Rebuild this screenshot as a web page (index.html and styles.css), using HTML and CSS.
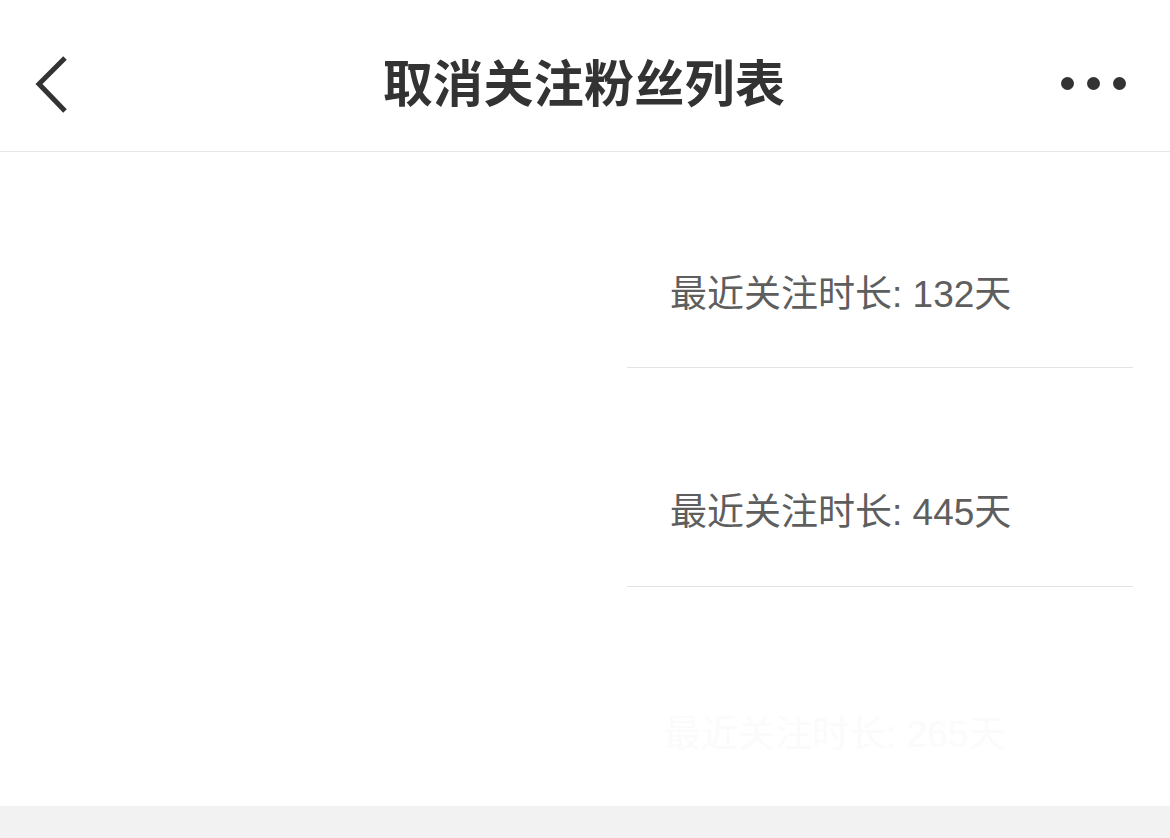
FILE: index.html
```html
<!DOCTYPE html>
<html lang="zh">
<head>
<meta charset="utf-8">
<title>取消关注粉丝列表</title>
<link rel="stylesheet" href="styles.css">
</head>
<body>
<div class="app">
  <header class="nav">
    <div class="nav-left">
      <svg class="back" width="40" height="64" viewBox="0 0 40 64">
        <polyline points="33,4 7,30 33,57" fill="none" stroke="#333" stroke-width="5" stroke-linecap="butt" stroke-linejoin="miter"/>
      </svg>
    </div>
    <h1 class="title">取消关注粉丝列表</h1>
    <div class="nav-right">
      <span class="dot"></span><span class="dot"></span><span class="dot"></span>
    </div>
  </header>
  <main class="content">
    <ul class="list">
      <li class="row first"><span class="label">最近关注时长: 132天</span></li>
      <li class="row"><span class="label">最近关注时长: 445天</span></li>
      <li class="row last"><span class="label ghost">最近关注时长: 265天</span></li>
    </ul>
  </main>
  <footer class="bottom"></footer>
</div>
</body>
</html>
```

FILE: styles.css
```css
* { box-sizing: border-box; }
html, body {
  margin: 0;
  padding: 0;
  background: #fff;
  font-family: "Noto Sans CJK SC", "Noto Sans", sans-serif;
}
.app {
  width: 1170px;
  height: 838px;
  display: flex;
  flex-direction: column;
  overflow: hidden;
}
.nav {
  height: 152px;
  flex: 0 0 152px;
  border-bottom: 1px solid #e6e6e6;
  display: flex;
  align-items: center;
  justify-content: space-between;
  padding: 0 44px 0 32px;
}
.nav-left {
  width: 120px;
  display: flex;
  align-items: center;
  margin-top: 20px;
}
.back { display: block; }
.title {
  margin: 0;
  font-size: 50px;
  font-weight: 700;
  color: #333;
  line-height: 1;
  margin-top: 8px;
  padding-left: 10px;
  letter-spacing: 0.3px;
}
.nav-right {
  width: 120px;
  display: flex;
  justify-content: flex-end;
  gap: 13px;
  margin-top: 15px;
}
.dot {
  width: 13px;
  height: 13px;
  border-radius: 50%;
  background: #333;
}
.content {
  flex: 1;
  background: #fff;
  display: flex;
  justify-content: flex-end;
  padding-right: 37px;
}
.list {
  list-style: none;
  margin: 0;
  padding: 0;
  width: 506px;
}
.row {
  height: 219px;
  border-bottom: 1px solid #e3e3e3;
  padding: 127px 0 0 43px;
}
.row.first { height: 216px; padding-top: 125px; }
.row.last { border-bottom: none; padding-top: 130px; }
.label {
  display: block;
  font-family: "Liberation Sans", "Noto Sans CJK SC", sans-serif;
  font-size: 37px;
  line-height: 36px;
  color: #5e5e5e;
  white-space: nowrap;
}
.ghost {
  color: #fbfbfb;
  margin-left: -6px;
}
.bottom {
  flex: 0 0 32px;
  background: #f2f2f2;
}
```
